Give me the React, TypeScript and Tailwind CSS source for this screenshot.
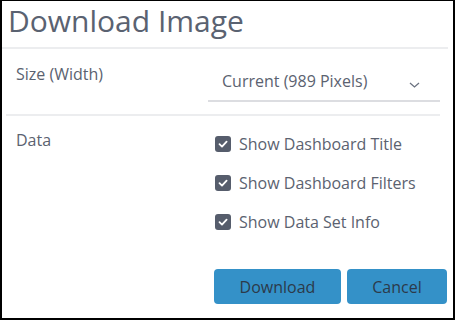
import React from "react";

function Check({ label }: { label: string }) {
  return (
    <div className="flex items-center h-[39px]">
      <div className="w-4 h-4 rounded-[3px] bg-[#565d6c] flex items-center justify-center">
        <svg width="12" height="12" viewBox="0 0 12 12">
          <polyline points="2.5,6.2 5,8.6 9.6,3.6" fill="none" stroke="#ffffff" strokeWidth="1.8" strokeLinecap="round" strokeLinejoin="round" />
        </svg>
      </div>
      <span className="ml-[8px] text-[16px] leading-[24px] text-[#5b6270]">{label}</span>
    </div>
  );
}

export default function App() {
  return (
    <div className="w-[455px] h-[320px] bg-white border-t border-l-2 border-r-2 border-b-2 border-black font-['Open_Sans',sans-serif] flex flex-col">
      <div className="pl-[6px] text-[30px] leading-[40px] text-[#5a6271]">Download Image</div>
      <div className="mt-[6px] h-[2px] bg-[#ecedef] mr-[5px]" />
      <div className="flex h-[65px]">
        <div className="w-[206px] pl-[14px] pt-[13px] text-[16px] leading-[24px] text-[#5b6270]">Size (Width)</div>
        <div className="w-[232px] h-[53px] pt-[20px] border-b-2 border-[#dcdde1] flex items-start">
          <span className="pl-[14px] text-[16px] leading-[24px] text-[#5b6270] flex-1">Current (989 Pixels)</span>
          <svg className="mt-[13px] mr-[20px]" width="11" height="6" viewBox="0 0 11 6">
            <polyline points="1,1 5.5,5 10,1" fill="none" stroke="#6b7280" strokeWidth="1.3" />
          </svg>
        </div>
      </div>
      <div className="h-[2px] bg-[#ecedef] ml-[4px] mr-[13px]" />
      <div className="flex flex-1">
        <div className="w-[213px] pl-[14px] pt-[12px] text-[16px] leading-[24px] text-[#5b6270]">Data</div>
        <div className="flex-1 flex flex-col pt-[8px]">
          <Check label="Show Dashboard Title" />
          <Check label="Show Dashboard Filters" />
          <Check label="Show Data Set Info" />
        </div>
      </div>
      <div className="flex justify-end gap-[6px] pr-[6px] pb-[14px]">
        <button className="w-[127px] h-[35px] rounded-[4px] bg-[#3491c8] text-[16px] text-[#2c3a4a]">Download</button>
        <button className="w-[100px] h-[35px] rounded-[4px] bg-[#3491c8] text-[16px] text-[#2c3a4a]">Cancel</button>
      </div>
    </div>
  );
}
